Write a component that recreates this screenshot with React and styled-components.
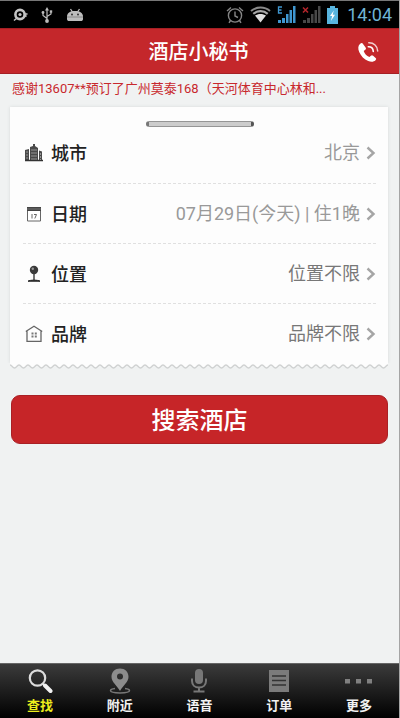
import React, { useState } from 'react'
import styled, { createGlobalStyle } from 'styled-components'

const rows = [
    { name: '城市', value: '北京', icon: CityIcon, tone: '#999' },
    { name: '日期', value: '07月29日(今天) | 住1晚', icon: DateIcon, tone: '#999' },
    { name: '位置', value: '位置不限', icon: PinIcon, tone: '#777' },
    { name: '品牌', value: '品牌不限', icon: HouseIcon, tone: '#777' },
]

const tabs = [
    { name: '查找', path: '#search', icon: SearchIcon },
    { name: '附近', path: '#nearby', icon: NearbyIcon },
    { name: '语音', path: '#voice', icon: MicIcon },
    { name: '订单', path: '#orders', icon: OrderIcon },
    { name: '更多', path: '#more', icon: MoreIcon },
]

const App = () => {
    const [active, setActive] = useState('查找')

    return (
        <Page>
            <GlobalStyle />
            <StatusBar>
                <StatusGroup className='left'>
                    <DiscIcon />
                    <UsbIcon />
                    <AndroidIcon />
                </StatusGroup>
                <StatusGroup className='right'>
                    <AlarmIcon />
                    <WifiIcon />
                    <SignalIcon />
                    <NoSignalIcon />
                    <BatteryIcon />
                    <Clock>14:04</Clock>
                </StatusGroup>
            </StatusBar>
            <Header>
                <Title>酒店小秘书</Title>
                <CallButton aria-label='电话'>
                    <PhoneIcon />
                </CallButton>
            </Header>
            <Notice>感谢13607**预订了广州莫泰168（天河体育中心林和...</Notice>
            <Main>
                <Card>
                    <Slot />
                    {rows.map(({ name, value, icon: Icon, tone }) => (
                        <Row key={name} type='button'>
                            <Icon />
                            <Label>{name}</Label>
                            <Value $tone={tone}>{value}</Value>
                            <ChevronIcon />
                        </Row>
                    ))}
                </Card>
                <TornEdge />
                <SearchButton type='button'>搜索酒店</SearchButton>
            </Main>
            <TabBar>
                {tabs.map(({ name, path, icon: Icon }) => (
                    <Tab key={name} href={path} $active={active === name} onClick={() => setActive(name)}>
                        <Icon />
                        {name}
                    </Tab>
                ))}
            </TabBar>
        </Page>
    )
}

export default App

/** ICONS */
function DiscIcon() {
    return (
        <svg width='16' height='16' viewBox='0 0 16 16' fill='none' stroke='#c4c4c4'>
            <circle cx='8' cy='7.5' r='4.6' strokeWidth='2.6' />
            <circle cx='8' cy='7.5' r='1.6' fill='#c4c4c4' stroke='none' />
            <path d='M4.5 11.5L2 13.5M12.5 7h3M13 8.500l1.500 1' strokeWidth='1.6' />
        </svg>
    )
}

function UsbIcon() {
    return (
        <svg width='12' height='16' viewBox='0 0 12 16' fill='none' stroke='#bbb' strokeWidth='1.2'>
            <path d='M6 3v10M6 11.500L2 8.500V6M6 9.500l4-2.500V4.500' />
            <path d='M6 0L8 3.500H4z' fill='#bbb' stroke='none' />
            <circle cx='6' cy='14' r='1.900' fill='#bbb' stroke='none' />
            <circle cx='2' cy='5.500' r='1.400' fill='#bbb' stroke='none' />
            <path d='M8.800 3.300h2.400v2.400H8.800z' fill='#bbb' stroke='none' />
        </svg>
    )
}

function AndroidIcon() {
    return (
        <svg width='18' height='14' viewBox='0 0 18 14'>
            <path d='M1 8.500C1 5 4 3 9 3s8 2 8 5.500V11c0 1.500-1 2-2 2H3c-1 0-2-.5-2-2z' fill='#bdbdbd' />
            <path d='M4.500 1l2 3M13.500 1l-2 3' stroke='#bdbdbd' strokeWidth='1.300' />
            <circle cx='6' cy='6.500' r='1' fill='#333' />
            <circle cx='12' cy='6.500' r='1' fill='#333' />
            <path d='M1 9h16' stroke='#888' />
        </svg>
    )
}

function AlarmIcon() {
    return (
        <svg width='18' height='18' viewBox='0 0 18 18' fill='none' stroke='#858585' strokeWidth='1.4'>
            <circle cx='9' cy='9.500' r='6.600' />
            <path d='M9 5.500v4.500l3 1.500M1 5l4-3.500M17 5l-4-3.500M4.500 14.500L3 16.800M13.500 14.500l1.500 2.300' />
        </svg>
    )
}

function WifiIcon() {
    return (
        <svg width='21' height='17' viewBox='0 0 21 17' fill='none'>
            <path d='M1 5C6.500.4 14.500.4 20 5' stroke='#8a8a8a' strokeWidth='2' />
            <path d='M3.300 7.800c4-3.500 10.400-3.500 14.400 0' stroke='#a8a8a8' strokeWidth='2.200' />
            <path d='M10.500 16.500L5 9.600c3-2.300 8-2.300 11 0z' fill='#ddd' />
        </svg>
    )
}

function SignalIcon() {
    return (
        <svg width='19' height='18' viewBox='0 0 19 18'>
            <path d='M1 17v-3h3v3zM5 17v-5h3v5zM9 17V8h2.500v9zM12.500 17V4H15v13zM16 17V0h2.500v17z' fill='#3f96cf' />
            <path d='M5 1H1.500v6H5M1.500 4h3' fill='none' stroke='#3f96cf' strokeWidth='1.300' />
        </svg>
    )
}

function NoSignalIcon() {
    return (
        <svg width='19' height='18' viewBox='0 0 19 18'>
            <path d='M1 17v-3h3v3zM5 17v-5h3v5zM9 17V8h2.500v9zM12.500 17V4H15v13zM16 17V0h2.500v17z' fill='#484848' />
            <path d='M1 1.500l5 5M6 1.500l-5 5' stroke='#b5252b' strokeWidth='1.500' />
        </svg>
    )
}

function BatteryIcon() {
    return (
        <svg width='11' height='18' viewBox='0 0 11 18'>
            <path d='M3 0h5v2h3v16H0V2h3z' fill='#58b5df' />
            <path d='M6.800 4.500L3 10h2.200l-1.300 5L8 8.800H5.700z' fill='#fff' />
        </svg>
    )
}

function PhoneIcon() {
    return (
        <svg width='22' height='22' viewBox='0 0 22 22' fill='none'>
            <path
                d='M3.200 2.800C1 4.500.7 7.500 2.200 11c1.700 4 5 7.400 9 9 3 1.100 5.600.9 7.300-.8.900-.9.900-1.500.1-2.200l-2.500-2.200c-.8-.7-1.400-.7-2.200 0l-1.500 1.300c-2.800-1.100-4.700-3.100-5.700-6l1.600-1.300c.8-.7.9-1.300.3-2.200L6.200 3.200c-.9-1.300-1.700-1.500-3-.4z'
                fill='#fff'
            />
            <path d='M11.300 5.800c2.900-.1 4.800 1.700 5 4.700' stroke='#fff' strokeWidth='1.600' strokeLinecap='round' />
            <path d='M11.800 1.800c5-.1 8.700 3.300 8.900 8.200' stroke='#f3cfd0' strokeWidth='1.500' strokeLinecap='round' />
        </svg>
    )
}

function CityIcon() {
    return (
        <svg width='18' height='18' viewBox='0 0 18 18'>
            <path d='M0 17V6l4-1v12zM5 17V3l3-1V0h2v2l3 2v13zM14 17V6.500l3 1V17z' fill='#4a4a4a' />
            <path d='M0 16.500h18' stroke='#333' strokeWidth='1.500' />
            <path d='M2 7v9M7 5v11M9 5v11M11 5v11M15.500 9v7' stroke='#aaa' strokeWidth='.8' strokeDasharray='2 1' />
        </svg>
    )
}

function DateIcon() {
    return (
        <svg width='18' height='18' viewBox='0 0 18 18'>
            <path d='M2.500 2.500h13v13.500h-13z' fill='#fff' stroke='#666' />
            <path d='M2 2h14v4H2z' fill='#444' />
            <path d='M2 4h14' stroke='#999' strokeWidth='.6' />
            <path d='M7 9v4.500M9 9.500h2.500L9.800 13.500' fill='none' stroke='#666' />
        </svg>
    )
}

function PinIcon() {
    return (
        <svg width='18' height='18' viewBox='0 0 18 18'>
            <circle cx='9' cy='5' r='4.200' fill='#3a3a3a' />
            <circle cx='7.800' cy='3.800' r='1.200' fill='#999' />
            <path d='M9 9v6' stroke='#444' strokeWidth='1.500' />
            <path d='M3 16.200c2-1.400 10-1.400 12 0z' fill='#222' stroke='#222' />
        </svg>
    )
}

function HouseIcon() {
    return (
        <svg width='18' height='18' viewBox='0 0 18 18' fill='none' stroke='#666' strokeWidth='1.300'>
            <path d='M.8 6.500L9 1.200l8.200 5.300M2 6v10.400h14V6' />
            <path d='M6.500 7.500h2v2h-2zM9.800 7.500h2v2h-2zM6.500 10.500h2v2h-2zM9.800 10.500h2v2h-2z' fill='#777' stroke='none' />
        </svg>
    )
}

function ChevronIcon() {
    return (
        <svg width='10' height='14' viewBox='0 0 10 14' fill='none' stroke='#a5a5a5' strokeWidth='2.400'>
            <path d='M1.500 1.500L7.500 7l-6 5.500' />
        </svg>
    )
}

function SearchIcon() {
    return (
        <svg width='26' height='26' viewBox='0 0 26 26' fill='none'>
            <circle cx='10.500' cy='10' r='7.700' stroke='#dcdcdc' strokeWidth='2.200' />
            <path d='M15.500 15.500l3 2.500' stroke='#dcdcdc' strokeWidth='2' />
            <path d='M18 17.500l5.500 5.500' stroke='#f2f2f2' strokeWidth='4' strokeLinecap='round' />
        </svg>
    )
}

function NearbyIcon() {
    return (
        <svg width='26' height='26' viewBox='0 0 26 26'>
            <path d='M8 20.500c-3 .4-4.500 1.200-4.500 2.100 0 1.400 4 2.400 9.500 2.400s9.500-1 9.500-2.400c0-.9-1.500-1.700-4.500-2.100' fill='none' stroke='#777' strokeWidth='1.500' />
            <path
                d='M13 .5c5 0 8.500 3.400 8.500 8.200C21.500 14 16 17.500 13 23 10 17.500 4.500 14 4.500 8.700 4.500 3.900 8 .5 13 .5zm0 5a3 3 0 100 6 3 3 0 000-6z'
                fill='#8c8c8c'
                fillRule='evenodd'
            />
        </svg>
    )
}

function MicIcon() {
    return (
        <svg width='26' height='26' viewBox='0 0 26 26' fill='none' stroke='#777' strokeWidth='2'>
            <rect x='9' y='1' width='8' height='15' rx='4' fill='#777' stroke='none' />
            <path d='M6 10.500v2.500c0 4 3 6.500 7 6.500s7-2.500 7-6.500v-2.500M13 19.500V23M7.500 23.500h11' />
        </svg>
    )
}

function OrderIcon() {
    return (
        <svg width='26' height='26' viewBox='0 0 26 26'>
            <path d='M3 2h20v22H3z' fill='#7b7b7b' />
            <path d='M6 8h14M6 12.500h14M6 17h14' stroke='#333' strokeWidth='1.300' />
        </svg>
    )
}

function MoreIcon() {
    return (
        <svg width='28' height='26' viewBox='0 0 28 26'>
            <path d='M0 11h5v4.500H0zM11 11h5v4.500h-5zM22 11h5v4.500h-5z' fill='#808080' />
        </svg>
    )
}

function TornEdge() {
    return (
        <Edge aria-hidden='true'>
            <defs>
                <pattern id='scallop' width='9' height='7' patternUnits='userSpaceOnUse'>
                    <path d='M0 0h9v2C7 2 6.500 5 4.500 5S2 2 0 2z' fill='#fdfdfd' />
                    <path d='M0 2c2 0 2.500 3 4.500 3S7 2 9 2' fill='none' stroke='#cfd1d1' strokeWidth='1.300' />
                </pattern>
            </defs>
            <rect width='100%' height='7' fill='url(#scallop)' />
        </Edge>
    )
}

/** STYLES */
const GlobalStyle = createGlobalStyle`
* {
    box-sizing: border-box;
}
body {
    margin: 0;
    background-color: #f0f2f2;
    font-family: Roboto, "Noto Sans CJK SC", sans-serif;
}
button {
    font-family: inherit;
    border: none;
    cursor: pointer;
}
svg {
    display: block;
    flex-shrink: 0;
}
`;

const Page = styled.div`
min-height: 100vh;
display: flex;
flex-direction: column;
border-right: 1px solid #a5a5a5;
`;

const StatusBar = styled.div`
height: 28px;
display: flex;
align-items: center;
justify-content: space-between;
padding: 0 7px 0 12px;
background-color: #000;
border-top: 1px solid #777;
`;

const StatusGroup = styled.div`
display: flex;
align-items: center;

&.left {
    gap: 13px;
}
&.right {
    gap: 6px;
}
`;

const Clock = styled.time`
color: #6fb4d4;
font-size: 18px;
line-height: 24px;
margin-left: 3px;
`;

const Header = styled.header`
height: 46px;
display: grid;
grid-template-columns: 60px 1fr 62px;
align-items: center;
background-color: #c4272b;
border-top: 1px solid #a51f24;
border-bottom: 1px solid #a51f24;
`;

const Title = styled.h1`
grid-column: 2;
margin: 0;
padding-top: 2px;
color: #fff;
font-size: 20px;
line-height: 28px;
font-weight: 500;
text-align: center;
`;

const CallButton = styled.button`
justify-self: center;
padding: 2px 0 0;
background: none;
`;

const Notice = styled.p`
margin: 0;
padding: 5px 12px 8px;
color: #c8282d;
font-size: 13px;
line-height: 20px;
white-space: nowrap;
overflow: hidden;
`;

const Main = styled.main`
flex: 1;
display: flex;
flex-direction: column;
padding: 0 11px 24px 10px;
`;

const Card = styled.section`
position: relative;
padding: 16px 12px 0 13px;
background-color: #fdfdfd;
box-shadow: 0 0 3px #d5d8d8;
clip-path: inset(-3px -3px 0 -3px);
`;

/* metal slot the paper hangs from */
const Slot = styled.div`
position: absolute;
top: 14px;
left: 50%;
width: 108px;
height: 6px;
margin-left: -53px;
border: 1px solid #959595;
border-left: 3px solid #777;
border-right: 3px solid #555;
border-radius: 3px;
background-color: #ccc;
`;

const Row = styled.button`
width: 100%;
height: 60px;
display: flex;
align-items: center;
padding: 0 0 0 2px;
background: none;
text-align: left;

& + & {
    border-top: 1px dashed #e0e0e0;
}
`;

const Label = styled.span`
margin-left: 8px;
padding-top: 2px;
color: #222;
font-size: 18px;
line-height: 26px;
font-weight: 500;
`;

const Value = styled.span`
flex: 1;
margin-right: 6px;
color: ${({ $tone }) => $tone};
font-size: 18px;
line-height: 26px;
text-align: right;
`;

const Edge = styled.svg`
width: 100%;
height: 7px;
`;

const SearchButton = styled.button`
height: 49px;
margin: 25px 0 0 1px;
padding: 2px 0 0;
border: 1px solid #a92025;
border-radius: 9px;
background-color: #c62528;
color: #fff;
font-size: 24px;
line-height: 32px;
font-weight: 500;
`;

const TabBar = styled.nav`
height: 55px;
display: flex;
border-top: 1px solid #666;
background: linear-gradient(#3b3b3b, #000);
`;

const Tab = styled.a`
flex: 1;
display: flex;
flex-direction: column;
align-items: center;
padding-top: 4px;
color: ${({ $active }) => $active ? '#eded1c' : '#f2f2f2'};
font-size: 13px;
line-height: 24px;
font-weight: 700;
text-decoration: none;
`;
